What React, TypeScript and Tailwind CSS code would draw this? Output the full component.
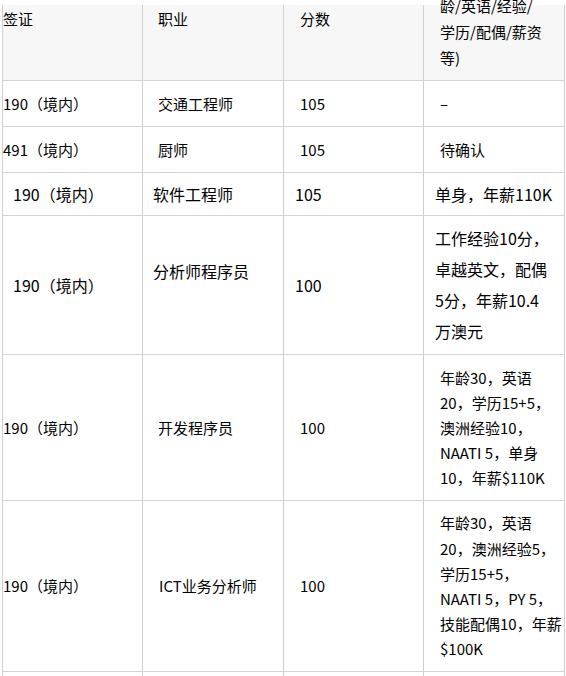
const FONT = { fontFamily: '"Noto Sans CJK SC", "Noto Sans", sans-serif' };

type Cell = { text: string[]; pl: string; pb?: string; size?: string; lh?: string };
type Row = { h: string; cells: Cell[] };

const ROWS: Row[] = [
  {
    h: 'h-[46px]',
    cells: [
      { text: ['190（境内）'], pl: 'pl-0' },
      { text: ['交通工程师'], pl: 'pl-[15px]' },
      { text: ['105'], pl: 'pl-[16px]' },
      { text: ['–'], pl: 'pl-[16px]' },
    ],
  },
  {
    h: 'h-[46px]',
    cells: [
      { text: ['491（境内）'], pl: 'pl-0' },
      { text: ['厨师'], pl: 'pl-[15px]' },
      { text: ['105'], pl: 'pl-[16px]' },
      { text: ['待确认'], pl: 'pl-[16px]' },
    ],
  },
  {
    h: 'h-[43px]',
    cells: [
      { text: ['190（境内）'], pl: 'pl-[10px]', size: 'text-[16px]' },
      { text: ['软件工程师'], pl: 'pl-[10px]', size: 'text-[16px]' },
      { text: ['105'], pl: 'pl-[11px]', size: 'text-[16px]' },
      { text: ['单身，年薪110K'], pl: 'pl-[11px]', size: 'text-[16px]' },
    ],
  },
  {
    h: 'h-[139px]',
    cells: [
      { text: ['190（境内）'], pl: 'pl-[10px]', size: 'text-[16px]' },
      { text: ['分析师程序员'], pl: 'pl-[10px]', pb: 'pb-[28px]', size: 'text-[16px]' },
      { text: ['100'], pl: 'pl-[11px]', size: 'text-[16px]' },
      {
        text: ['工作经验10分，', '卓越英文，配偶', '5分，年薪10.4', '万澳元'],
        pl: 'pl-[11px]',
        size: 'text-[16px]',
        lh: 'leading-[31px]',
      },
    ],
  },
  {
    h: 'h-[146px]',
    cells: [
      { text: ['190（境内）'], pl: 'pl-0' },
      { text: ['开发程序员'], pl: 'pl-[15px]' },
      { text: ['100'], pl: 'pl-[16px]' },
      {
        text: ['年龄30，英语', '20，学历15+5，', '澳洲经验10，', 'NAATI 5，单身', '10，年薪$110K'],
        pl: 'pl-[16px]',
        lh: 'leading-[25px]',
      },
    ],
  },
  {
    h: 'h-[171px]',
    cells: [
      { text: ['190（境内）'], pl: 'pl-0' },
      { text: ['ICT业务分析师'], pl: 'pl-[16px]' },
      { text: ['100'], pl: 'pl-[16px]' },
      {
        text: ['年龄30，英语', '20，澳洲经验5，', '学历15+5，', 'NAATI 5，PY 5，', '技能配偶10，年薪', '$100K'],
        pl: 'pl-[16px]',
        lh: 'leading-[25.2px]',
      },
    ],
  },
];

const WIDTHS = ['w-[140px]', 'w-[141px]', 'w-[140px]', 'w-[141px]'];

export default function App() {
  return (
    <div className="w-[566px] h-[676px] overflow-hidden bg-white pt-[5px] text-black" style={FONT}>
      <div className="ml-[2px] w-[563px] border-l border-[#cfcfcf]">
        {/* header */}
        <div className="flex h-[76px] bg-[#f7f7f7] border-b border-[#d3d3d3] text-[15px] leading-[26px]">
          <div className={`${WIDTHS[0]} shrink-0 border-r border-[#cfcfcf] pt-[1px]`}>签证</div>
          <div className={`${WIDTHS[1]} shrink-0 border-r border-[#cfcfcf] pt-[1px] pl-[15px]`}>职业</div>
          <div className={`${WIDTHS[2]} shrink-0 border-r border-[#cfcfcf] pt-[1px] pl-[16px]`}>分数</div>
          <div className={`${WIDTHS[3]} shrink-0 border-r border-[#cfcfcf] pl-[16px] whitespace-nowrap`}>
            <div className="-mt-[12px]">
              龄/英语/经验/
              <br />
              学历/配偶/薪资
              <br />
              等)
            </div>
          </div>
        </div>

        {ROWS.map((row, i) => (
          <div key={i} className={`flex ${row.h} border-b border-[#d3d3d3]`}>
            {row.cells.map((c, j) => (
              <div
                key={j}
                className={`${WIDTHS[j]} shrink-0 border-r border-[#cfcfcf] flex flex-col justify-center whitespace-nowrap ${c.pl} ${c.pb ?? ''} ${c.size ?? 'text-[15px]'} ${c.lh ?? 'leading-[24px]'}`}
              >
                {c.text.map((t, k) => (
                  <div key={k}>{t}</div>
                ))}
              </div>
            ))}
          </div>
        ))}

        <div className="flex h-[60px]">
          {WIDTHS.map((w, j) => (
            <div key={j} className={`${w} shrink-0 border-r border-[#cfcfcf]`} />
          ))}
        </div>
      </div>
    </div>
  );
}
